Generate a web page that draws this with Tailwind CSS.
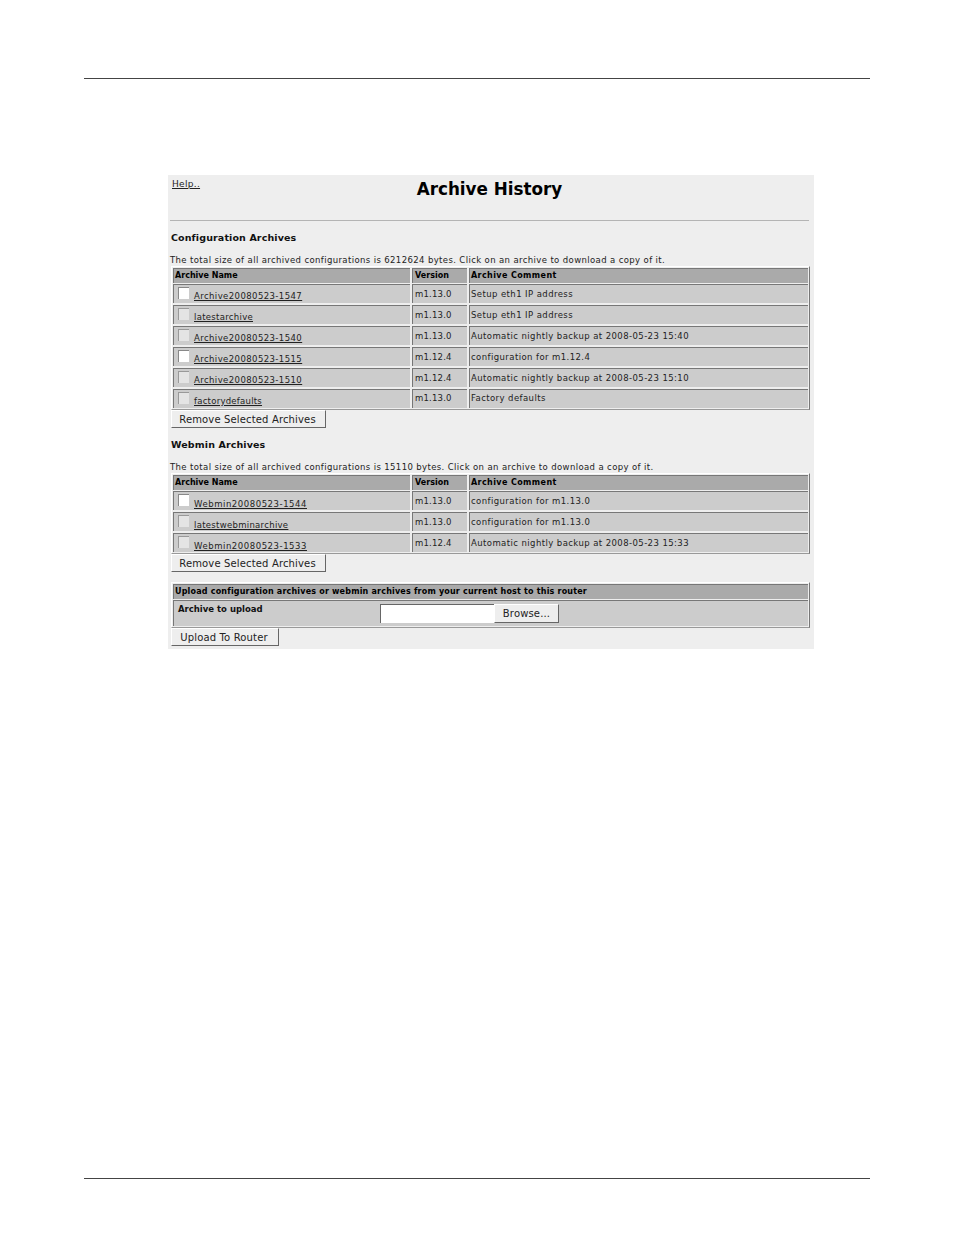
<!DOCTYPE html>
<html>
<head>
<meta charset="utf-8">
<script src="https://cdn.jsdelivr.net/npm/@tailwindcss/browser@4"></script>
</head>
<body class="bg-white font-['DejaVu_Sans',sans-serif] text-black">
<div class="w-[954px] h-[1235px] flex flex-col px-[84px] pt-[78px]">
  <div class="h-px bg-[#444]"></div>
  <main class="w-[646px] h-[474px] mt-[96px] ml-[84px] bg-[#eeeeee] flex flex-col">
    <div class="h-[45px] relative flex justify-center pt-[3px]">
      <a class="absolute left-[4px] top-[3px] text-[9px] leading-[12px] underline tracking-[0.3px] text-[#222]">Help..</a>
      <h1 class="text-[16.8px] leading-[22px] font-bold ml-[-3px]">Archive History</h1>
    </div>
    <div class="h-px bg-[#b4b4b4] ml-[2px] mr-[5px]"></div>
    <h2 class="text-[9.5px] leading-[12px] font-bold ml-[3px] mt-[11px] tracking-[0.12px] text-[#111]">Configuration Archives</h2>
    <p class="text-[8.5px] leading-[10px] ml-[2px] mt-[11px] tracking-[0.38px] text-[#222]">The total size of all archived configurations is 6212624 bytes. Click on an archive to download a copy of it.</p>
    <section class="ml-[3px] w-[639px] mt-[1px] border border-t-white border-l-white border-r-[#777] border-b-[#999] px-px pt-px pb-[1px] grid grid-cols-[237px_55px_1fr] gap-x-[2px] text-[8.5px] tracking-[0.42px] text-[#222]">
      <div class="h-[15px] bg-[#aaaaaa] border-t border-l border-[#777] font-bold leading-[13px] pl-[1px] text-[8px] tracking-normal text-black">Archive Name</div>
      <div class="h-[15px] bg-[#aaaaaa] border-t border-l border-[#777] font-bold leading-[13px] pl-[2px] text-[8px] tracking-normal text-black">Version</div>
      <div class="h-[15px] bg-[#aaaaaa] border-t border-l border-[#777] font-bold leading-[13px] pl-[1px] text-[8px] tracking-[0.4px] text-black">Archive Comment</div>

      <div class="mt-[1px] h-[19px] bg-[#cccccc] border-t border-l border-[#777] flex items-start pl-[4px]"><span class="mt-[2px] w-[11px] h-[12px] bg-white border-t border-l border-[#888] shrink-0"></span><a class="ml-[5px] mt-[6px] leading-[10px] underline">Archive20080523-1547</a></div>
      <div class="mt-[1px] h-[19px] bg-[#cccccc] border-t border-l border-[#777] pl-[2px] leading-[18px] tracking-[0.2px]">m1.13.0</div>
      <div class="mt-[1px] h-[19px] bg-[#cccccc] border-t border-l border-[#777] pl-[1px] leading-[18px]">Setup eth1 IP address</div>

      <div class="mt-[2px] h-[19px] bg-[#cccccc] border-t border-l border-[#777] flex items-start pl-[4px]"><span class="mt-[2px] w-[11px] h-[12px] bg-[#e4e4e4] border-t border-l border-[#999] shrink-0"></span><a class="ml-[5px] mt-[6px] leading-[10px] underline tracking-[0.3px]">latestarchive</a></div>
      <div class="mt-[2px] h-[19px] bg-[#cccccc] border-t border-l border-[#777] pl-[2px] leading-[18px] tracking-[0.2px]">m1.13.0</div>
      <div class="mt-[2px] h-[19px] bg-[#cccccc] border-t border-l border-[#777] pl-[1px] leading-[18px]">Setup eth1 IP address</div>

      <div class="mt-[2px] h-[19px] bg-[#cccccc] border-t border-l border-[#777] flex items-start pl-[4px]"><span class="mt-[2px] w-[11px] h-[12px] bg-[#e4e4e4] border-t border-l border-[#999] shrink-0"></span><a class="ml-[5px] mt-[6px] leading-[10px] underline">Archive20080523-1540</a></div>
      <div class="mt-[2px] h-[19px] bg-[#cccccc] border-t border-l border-[#777] pl-[2px] leading-[18px] tracking-[0.2px]">m1.13.0</div>
      <div class="mt-[2px] h-[19px] bg-[#cccccc] border-t border-l border-[#777] pl-[1px] leading-[18px]">Automatic nightly backup at 2008-05-23 15:40</div>

      <div class="mt-[2px] h-[19px] bg-[#cccccc] border-t border-l border-[#777] flex items-start pl-[4px]"><span class="mt-[2px] w-[11px] h-[12px] bg-white border-t border-l border-[#888] shrink-0"></span><a class="ml-[5px] mt-[6px] leading-[10px] underline">Archive20080523-1515</a></div>
      <div class="mt-[2px] h-[19px] bg-[#cccccc] border-t border-l border-[#777] pl-[2px] leading-[18px] tracking-[0.2px]">m1.12.4</div>
      <div class="mt-[2px] h-[19px] bg-[#cccccc] border-t border-l border-[#777] pl-[1px] leading-[18px]">configuration for m1.12.4</div>

      <div class="mt-[2px] h-[19px] bg-[#cccccc] border-t border-l border-[#777] flex items-start pl-[4px]"><span class="mt-[2px] w-[11px] h-[12px] bg-[#e4e4e4] border-t border-l border-[#999] shrink-0"></span><a class="ml-[5px] mt-[6px] leading-[10px] underline">Archive20080523-1510</a></div>
      <div class="mt-[2px] h-[19px] bg-[#cccccc] border-t border-l border-[#777] pl-[2px] leading-[18px] tracking-[0.2px]">m1.12.4</div>
      <div class="mt-[2px] h-[19px] bg-[#cccccc] border-t border-l border-[#777] pl-[1px] leading-[18px]">Automatic nightly backup at 2008-05-23 15:10</div>

      <div class="mt-[2px] h-[19px] bg-[#cccccc] border-t border-l border-[#777] flex items-start pl-[4px]"><span class="mt-[2px] w-[11px] h-[12px] bg-[#e4e4e4] border-t border-l border-[#999] shrink-0"></span><a class="ml-[5px] mt-[6px] leading-[10px] underline tracking-[0.25px]">factorydefaults</a></div>
      <div class="mt-[2px] h-[19px] bg-[#cccccc] border-t border-l border-[#777] pl-[2px] leading-[17px] tracking-[0.2px]">m1.13.0</div>
      <div class="mt-[2px] h-[19px] bg-[#cccccc] border-t border-l border-[#777] pl-[1px] leading-[17px]">Factory defaults</div>
    </section>
    <button class="ml-[3px] w-[155px] h-[18px] bg-[#eeeeee] border border-t-white border-l-white border-r-[#666] border-b-[#666] pr-[2px] text-[10px] leading-[15px] tracking-[0.15px] text-[#222] text-center">Remove Selected Archives</button>
    <h2 class="text-[9.5px] leading-[12px] font-bold ml-[3px] mt-[11px] tracking-[0.12px] text-[#111]">Webmin Archives</h2>
    <p class="text-[8.5px] leading-[10px] ml-[2px] mt-[11px] tracking-[0.38px] text-[#222]">The total size of all archived configurations is 15110 bytes. Click on an archive to download a copy of it.</p>
    <section class="ml-[3px] w-[639px] mt-[1px] border border-t-white border-l-white border-r-[#777] border-b-[#999] px-px pt-px pb-[1px] grid grid-cols-[237px_55px_1fr] gap-x-[2px] text-[8.5px] tracking-[0.42px] text-[#222]">
      <div class="h-[15px] bg-[#aaaaaa] border-t border-l border-[#777] font-bold leading-[13px] pl-[1px] text-[8px] tracking-normal text-black">Archive Name</div>
      <div class="h-[15px] bg-[#aaaaaa] border-t border-l border-[#777] font-bold leading-[13px] pl-[2px] text-[8px] tracking-normal text-black">Version</div>
      <div class="h-[15px] bg-[#aaaaaa] border-t border-l border-[#777] font-bold leading-[13px] pl-[1px] text-[8px] tracking-[0.4px] text-black">Archive Comment</div>

      <div class="mt-[1px] h-[19px] bg-[#cccccc] border-t border-l border-[#777] flex items-start pl-[4px]"><span class="mt-[2px] w-[11px] h-[12px] bg-white border-t border-l border-[#888] shrink-0"></span><a class="ml-[5px] mt-[7px] leading-[10px] underline tracking-[0.55px]">Webmin20080523-1544</a></div>
      <div class="mt-[1px] h-[19px] bg-[#cccccc] border-t border-l border-[#777] pl-[2px] leading-[18px] tracking-[0.2px]">m1.13.0</div>
      <div class="mt-[1px] h-[19px] bg-[#cccccc] border-t border-l border-[#777] pl-[1px] leading-[18px]">configuration for m1.13.0</div>

      <div class="mt-[2px] h-[19px] bg-[#cccccc] border-t border-l border-[#777] flex items-start pl-[4px]"><span class="mt-[2px] w-[11px] h-[12px] bg-[#e4e4e4] border-t border-l border-[#999] shrink-0"></span><a class="ml-[5px] mt-[7px] leading-[10px] underline tracking-[0.3px]">latestwebminarchive</a></div>
      <div class="mt-[2px] h-[19px] bg-[#cccccc] border-t border-l border-[#777] pl-[2px] leading-[18px] tracking-[0.2px]">m1.13.0</div>
      <div class="mt-[2px] h-[19px] bg-[#cccccc] border-t border-l border-[#777] pl-[1px] leading-[18px]">configuration for m1.13.0</div>

      <div class="mt-[2px] h-[19px] bg-[#cccccc] border-t border-l border-[#777] flex items-start pl-[4px]"><span class="mt-[2px] w-[11px] h-[12px] bg-[#e4e4e4] border-t border-l border-[#999] shrink-0"></span><a class="ml-[5px] mt-[7px] leading-[10px] underline tracking-[0.55px]">Webmin20080523-1533</a></div>
      <div class="mt-[2px] h-[19px] bg-[#cccccc] border-t border-l border-[#777] pl-[2px] leading-[18px] tracking-[0.2px]">m1.12.4</div>
      <div class="mt-[2px] h-[19px] bg-[#cccccc] border-t border-l border-[#777] pl-[1px] leading-[18px]">Automatic nightly backup at 2008-05-23 15:33</div>
    </section>
    <button class="ml-[3px] w-[155px] h-[18px] bg-[#eeeeee] border border-t-white border-l-white border-r-[#666] border-b-[#666] pr-[2px] text-[10px] leading-[15px] tracking-[0.15px] text-[#222] text-center">Remove Selected Archives</button>
    <section class="ml-[3px] w-[639px] mt-[10px] border border-t-white border-l-white border-r-[#777] border-b-[#999] px-px pt-px pb-[1px] text-[8px] font-bold text-[#111]">
      <div class="h-[15px] bg-[#aaaaaa] border-t border-l border-[#777] leading-[13px] pl-[1px] tracking-[0.19px] text-black">Upload configuration archives or webmin archives from your current host to this router</div>
      <div class="mt-[1px] h-[26px] bg-[#cccccc] border-t border-l border-[#777] flex items-start pl-[4px]">
        <span class="mt-[2px] w-[202px] leading-[12px] text-[8.5px]">Archive to upload</span>
        <span class="mt-[3px] w-[114px] h-[19px] bg-white border-t border-l border-[#666] shrink-0"></span>
        <button class="mt-[3px] w-[65px] h-[19px] bg-[#eeeeee] border border-t-white border-l-white border-r-[#666] border-b-[#666] text-[10px] leading-[16px] tracking-[0.15px] font-normal text-[#222] text-center">Browse...</button>
      </div>
    </section>
    <button class="ml-[3px] w-[108px] h-[18px] bg-[#eeeeee] border border-t-white border-l-white border-r-[#666] border-b-[#666] pr-[2px] text-[10px] leading-[15px] tracking-[0.15px] text-[#222] text-center">Upload To Router</button>
  </main>
  <div class="h-px bg-[#444] mt-[529px]"></div>
</div>
</body>
</html>
